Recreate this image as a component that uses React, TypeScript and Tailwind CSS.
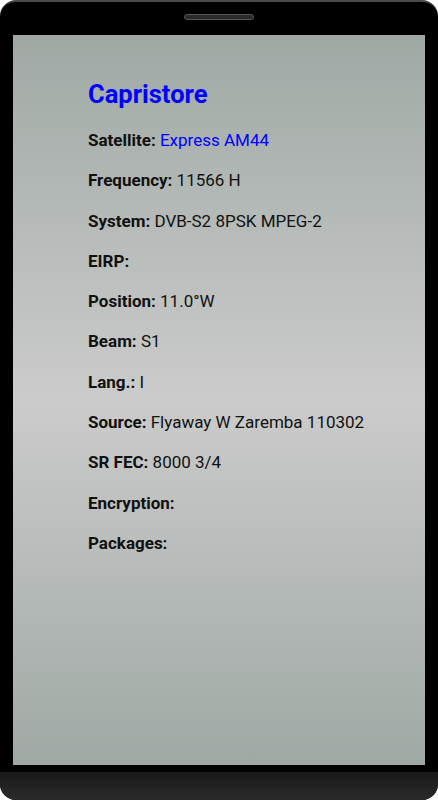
import React from "react";

const rows: { label: string; value: string; blue?: boolean }[] = [
  { label: "Satellite:", value: "Express AM44", blue: true },
  { label: "Frequency:", value: "11566 H" },
  { label: "System:", value: "DVB-S2 8PSK MPEG-2" },
  { label: "EIRP:", value: "" },
  { label: "Position:", value: "11.0°W" },
  { label: "Beam:", value: "S1" },
  { label: "Lang.:", value: "I" },
  { label: "Source:", value: "Flyaway W Zaremba 110302" },
  { label: "SR FEC:", value: "8000 3/4" },
  { label: "Encryption:", value: "" },
  { label: "Packages:", value: "" },
];

export default function App() {
  return (
    <div className="w-[438px] h-[800px] bg-white">
      <div className="w-[438px] h-[800px] bg-black rounded-[16px] border-t-[2px] border-[#4a4a4a] flex flex-col overflow-hidden">
        <div className="h-[33px] flex justify-center pt-[12px]">
          <div className="w-[70px] h-[6px] rounded-full border border-[#555] bg-[#2a2a2a]" />
        </div>
        <div
          className="mx-[13px] h-[730px] bg-[linear-gradient(180deg,#9fa9a4_0%,#cbcbcb_50%,#9fa9a4_100%)] pl-[75px] pt-[43px] flex flex-col"
          style={{ fontFamily: "Roboto, 'Liberation Sans', sans-serif" }}
        >
          <div className="text-[25.5px] leading-[32px] font-bold text-[#0000ff]">Capristore</div>
          <div className="mt-[18px] flex flex-col gap-[16.3px]">
            {rows.map((r) => (
              <div key={r.label} className="text-[17px] leading-[24px] text-[#111]">
                <span className="font-bold">{r.label}</span>
                {r.value && (
                  <span className={r.blue ? "text-[#0000ff]" : ""}> {r.value}</span>
                )}
              </div>
            ))}
          </div>
        </div>
        <div className="h-[7px] bg-black" />
        <div className="flex-1 bg-[linear-gradient(180deg,#1a1a1a,#2b2b2b)]" />
      </div>
    </div>
  );
}
